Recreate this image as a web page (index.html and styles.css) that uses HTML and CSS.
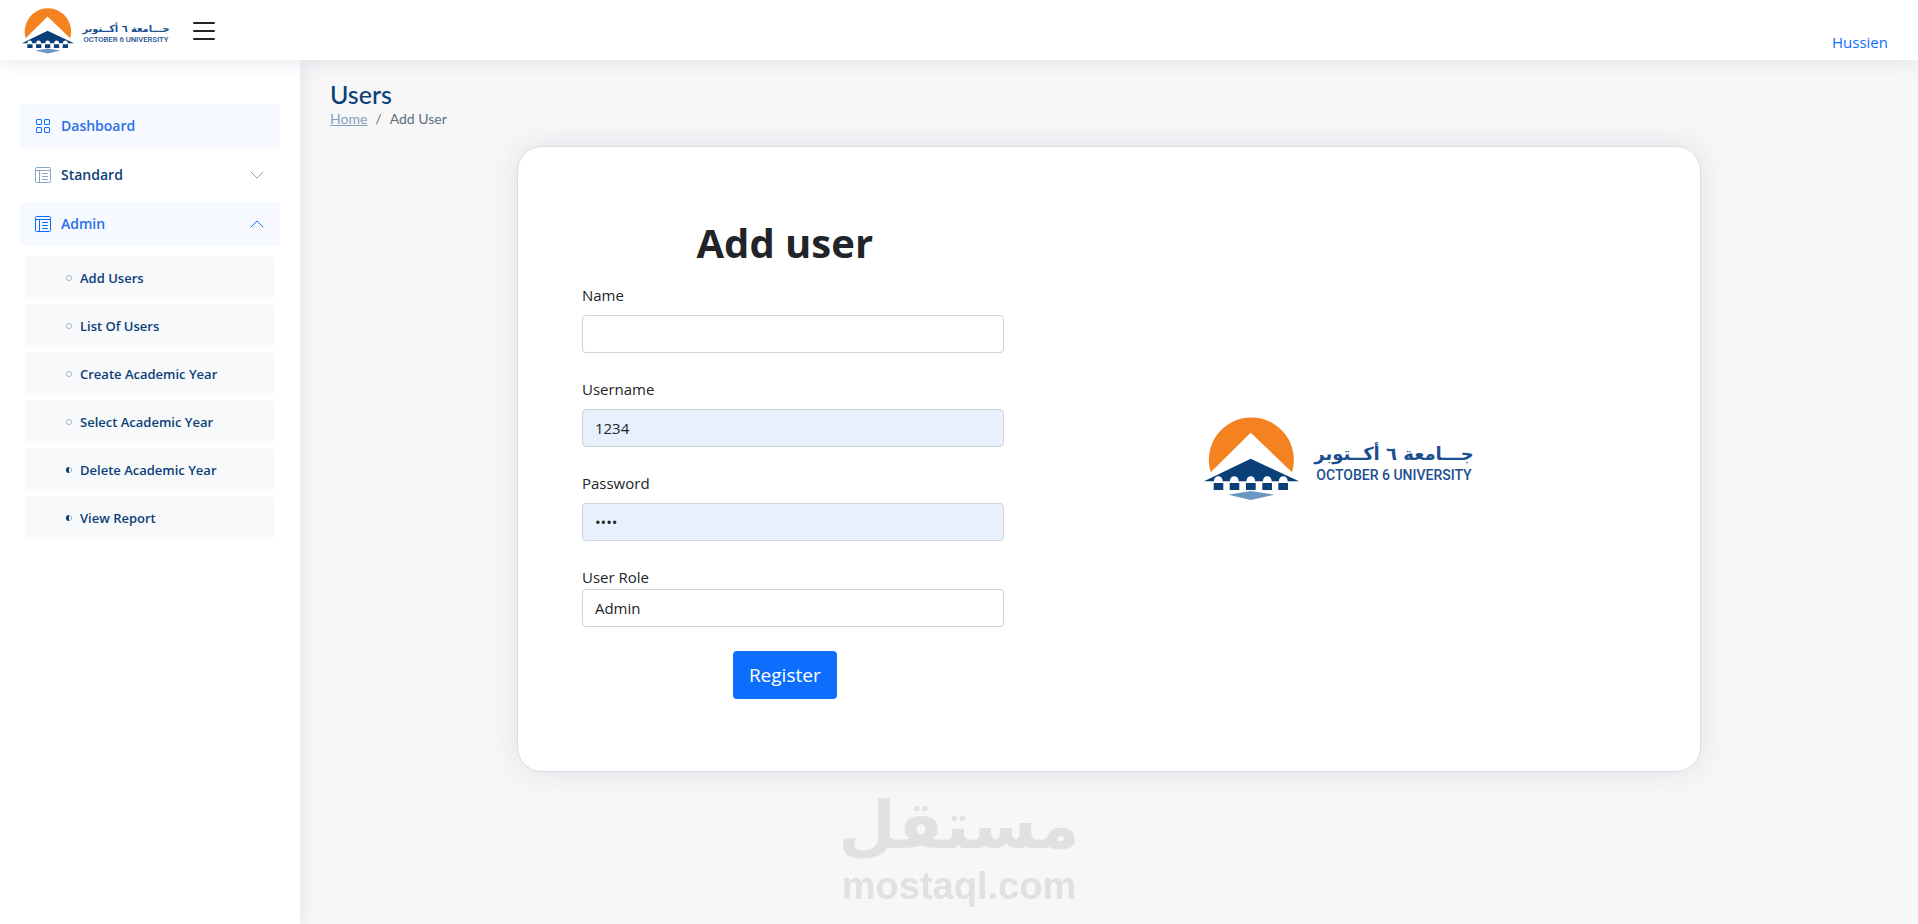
FILE: index.html
```html
<!DOCTYPE html>
<html lang="en">
<head>
    <meta charset="UTF-8">
    <meta name="viewport" content="width=device-width, initial-scale=1.0">
    <title>Add User - October 6 University</title>
    <link rel="stylesheet" href="styles.css">
</head>
<body>
    <!-- Shared icons -->
    <svg class="sprite" aria-hidden="true">
        <symbol id="logo" viewBox="0 0 274 84" overflow="visible">
            <path fill="#f58220" d="M6.700 55.300A42.500 42.500 0 1 1 88 55.300L46.700 15.700Z"/>
            <path fill="#0b3f78" d="M0 64.300L46.700 41.700L95 64.300Z"/>
            <path fill="#fff" d="M10 66v-2.500a4.300 4.300 0 0 1 8.600 0V66zM26 66v-2.500a4.300 4.300 0 0 1 8.600 0V66zM42.500 66v-2.500a4.300 4.300 0 0 1 8.600 0V66zM59 66v-2.500a4.300 4.300 0 0 1 8.600 0V66zM75 66v-2.500a4.300 4.300 0 0 1 8.600 0V66z"/>
            <path fill="#0b3f78" d="M9.700 66h9.600v7H9.700zM25.700 66h9.600v7h-9.600zM42 66h9.700v7H42zM58.300 66H68v7h-9.700zM74.300 66H84v7h-9.700z"/>
            <path fill="#6c97c1" d="M24.300 77.700L46.700 74L70.300 77.700L46.700 83Z"/>
            <text class="logo-ar" x="190" y="43" text-anchor="middle">جـــامعة ٦ أكــتوبر</text>
            <text class="logo-en" x="190" y="63" text-anchor="middle">OCTOBER 6 UNIVERSITY</text>
        </symbol>
        <symbol id="icon-grid" viewBox="0 0 16 16">
            <path d="M1 2.5A1.500 1.500 0 0 1 2.500 1h3A1.500 1.500 0 0 1 7 2.500v3A1.500 1.500 0 0 1 5.500 7h-3A1.500 1.500 0 0 1 1 5.500zM2.500 2a.5.5 0 0 0-.5.5v3a.5.5 0 0 0 .5.5h3a.5.5 0 0 0 .5-.5v-3a.5.5 0 0 0-.5-.5zm6.500.5A1.500 1.500 0 0 1 10.500 1h3A1.500 1.500 0 0 1 15 2.500v3A1.500 1.500 0 0 1 13.500 7h-3A1.500 1.500 0 0 1 9 5.500zm1.500-.5a.5.5 0 0 0-.5.5v3a.5.5 0 0 0 .5.5h3a.5.5 0 0 0 .5-.5v-3a.5.5 0 0 0-.5-.5zM1 10.500A1.500 1.500 0 0 1 2.500 9h3A1.500 1.500 0 0 1 7 10.500v3A1.500 1.500 0 0 1 5.500 15h-3A1.500 1.500 0 0 1 1 13.500zm1.500-.5a.5.5 0 0 0-.5.5v3a.5.5 0 0 0 .5.5h3a.5.5 0 0 0 .5-.5v-3a.5.5 0 0 0-.5-.5zm6.500.5A1.500 1.500 0 0 1 10.500 9h3a1.500 1.500 0 0 1 1.500 1.500v3a1.500 1.500 0 0 1-1.500 1.500h-3A1.500 1.500 0 0 1 9 13.500zm1.500-.5a.5.5 0 0 0-.5.5v3a.5.5 0 0 0 .5.5h3a.5.5 0 0 0 .5-.5v-3a.5.5 0 0 0-.5-.5z"/>
        </symbol>
        <symbol id="icon-list" viewBox="0 0 16 16">
            <g fill="none" stroke="currentColor">
                <rect x=".5" y=".5" width="15" height="15" rx="1"/>
                <path d="M.5 3.500h15M4.500 3.500v12"/>
                <path stroke-linecap="round" d="M7.500 6.500h5M7.500 9.500h5M7.500 12.500h5"/>
            </g>
        </symbol>
        <symbol id="icon-down" viewBox="0 0 16 16">
            <path fill="none" stroke="currentColor" stroke-linecap="round" stroke-linejoin="round" d="M2 5l6 6l6-6"/>
        </symbol>
        <symbol id="icon-up" viewBox="0 0 16 16">
            <path fill="none" stroke="currentColor" stroke-linecap="round" stroke-linejoin="round" d="M2 11l6-6l6 6"/>
        </symbol>
        <symbol id="icon-circle" viewBox="0 0 16 16">
            <circle cx="8" cy="8" r="7" fill="none" stroke="currentColor" stroke-width="2"/>
        </symbol>
        <symbol id="icon-half" viewBox="0 0 16 16">
            <circle cx="8" cy="8" r="7" fill="none" stroke="currentColor" stroke-width="1"/>
            <path d="M8 0a8 8 0 0 0 0 16z"/>
        </symbol>
    </svg>

    <header class="header">
        <a href="#" class="logo" aria-label="October 6 University">
            <svg class="logo-small"><use href="#logo"/></svg>
        </a>
        <button type="button" class="toggle-btn" aria-label="Toggle sidebar">
            <svg viewBox="0 0 22 18"><path fill="none" stroke="currentColor" stroke-width="2" stroke-linecap="round" d="M1 1h20M1 9h20M1 17h20"/></svg>
        </button>
        <a href="#" class="profile">Hussien</a>
    </header>

    <div class="layout">
        <aside class="sidebar">
            <nav>
                <ul class="nav-list">
                    <li><a href="#" class="nav-link active"><svg><use href="#icon-grid"/></svg><span>Dashboard</span></a></li>
                    <li><a href="#" class="nav-link"><svg><use href="#icon-list"/></svg><span>Standard</span><svg class="chevron"><use href="#icon-down"/></svg></a></li>
                    <li>
                        <a href="#" class="nav-link active"><svg><use href="#icon-list"/></svg><span>Admin</span><svg class="chevron"><use href="#icon-up"/></svg></a>
                        <ul class="sub-list">
                            <li><a href="#" class="sub-link"><svg><use href="#icon-circle"/></svg><span>Add Users</span></a></li>
                            <li><a href="#" class="sub-link"><svg><use href="#icon-circle"/></svg><span>List Of Users</span></a></li>
                            <li><a href="#" class="sub-link"><svg><use href="#icon-circle"/></svg><span>Create Academic Year</span></a></li>
                            <li><a href="#" class="sub-link"><svg><use href="#icon-circle"/></svg><span>Select Academic Year</span></a></li>
                            <li><a href="#" class="sub-link"><svg class="half"><use href="#icon-half"/></svg><span>Delete Academic Year</span></a></li>
                            <li><a href="#" class="sub-link"><svg class="half"><use href="#icon-half"/></svg><span>View Report</span></a></li>
                        </ul>
                    </li>
                </ul>
            </nav>
        </aside>

        <main class="main">
            <div class="page-title">
                <h1>Users</h1>
                <nav class="breadcrumb">
                    <a href="#">Home</a>
                    <span>/</span>
                    <span>Add User</span>
                </nav>
            </div>

            <section class="card">
                <form class="user-form">
                    <h2>Add user</h2>

                    <div class="form-group">
                        <label for="name">Name</label>
                        <input type="text" id="name" name="name">
                    </div>

                    <div class="form-group">
                        <label for="username">Username</label>
                        <input type="text" id="username" name="username" class="filled" value="1234">
                    </div>

                    <div class="form-group">
                        <label for="password">Password</label>
                        <input type="password" id="password" name="password" class="filled" value="1234">
                    </div>

                    <div class="form-group role-group">
                        <label for="role">User Role</label>
                        <select id="role" name="role">
                            <option selected>Admin</option>
                        </select>
                    </div>

                    <div class="form-action">
                        <button type="submit" class="register-btn">Register</button>
                    </div>
                </form>

                <div class="card-logo">
                    <svg class="logo-large" role="img" aria-label="October 6 University"><use href="#logo"/></svg>
                </div>
            </section>
        </main>
    </div>

    <div class="watermark">
        <span class="watermark-ar" lang="ar">مستقل</span>
        <span class="watermark-en">mostaql.com</span>
    </div>
</body>
</html>
```

FILE: styles.css
```css
:root {
    --primary-color: #0d6efd;
    --navy: #0b3f78;
    --muted: #8aa4c4;
    --text-color: #212529;
    --background-color: #f7f7f7;
    --shadow: rgba(1, 41, 112, 0.1);
}

* {
    margin: 0;
    padding: 0;
    box-sizing: border-box;
}

body {
    display: flex;
    flex-direction: column;
    min-height: 100vh;
    font-family: "Open Sans", "Noto Sans", sans-serif;
    font-size: 15px;
    line-height: 24px;
    color: var(--text-color);
    background-color: var(--background-color);
}

ul {
    list-style: none;
}

a {
    text-decoration: none;
}

svg {
    fill: currentColor;
}

.sprite {
    position: absolute;
    width: 0;
    height: 0;
}

/* Header */
.header {
    position: relative;
    z-index: 2;
    display: flex;
    align-items: center;
    height: 60px;
    padding: 2px 30px 0 22px;
    background-color: #fff;
    box-shadow: 0 2px 20px var(--shadow);
}

.logo {
    display: flex;
}

.logo-small {
    width: 150px;
    height: 46px;
    overflow: visible;
}

.logo-ar {
    font-family: "DejaVu Sans", sans-serif;
    font-size: 18px;
    font-weight: bold;
    fill: #1b4f8f;
}

.logo-en {
    font-family: Roboto, sans-serif;
    font-size: 14px;
    font-weight: 500;
    fill: #1b4f8f;
}

.toggle-btn {
    display: flex;
    margin-left: 21px;
    border: none;
    background: none;
    color: var(--text-color);
    cursor: pointer;
}

.toggle-btn svg {
    width: 22px;
    height: 18px;
}

.profile {
    margin-left: auto;
    padding-top: 22px;
    color: var(--primary-color);
}

/* Sidebar */
.layout {
    display: flex;
    flex: 1;
}

.sidebar {
    position: relative;
    flex: 0 0 300px;
    padding: 44px 20px 20px;
    background-color: #fff;
    box-shadow: 0 0 20px var(--shadow);
}

.nav-list {
    display: flex;
    flex-direction: column;
    gap: 5px;
}

.nav-link {
    display: flex;
    align-items: center;
    gap: 10px;
    height: 44px;
    padding: 0 15px;
    border-radius: 4px;
    font-weight: 600;
    font-size: 14px;
    color: var(--navy);
}

.nav-link svg {
    width: 16px;
    height: 16px;
    color: var(--muted);
}

.nav-link .chevron {
    margin-left: auto;
}

.nav-link.active {
    background-color: #f6f9ff;
    color: #2a6fe8;
}

.nav-link.active svg {
    color: var(--primary-color);
}

.sub-list {
    display: flex;
    flex-direction: column;
    gap: 5px;
    padding: 10px 5px;
}

.sub-link {
    display: flex;
    align-items: center;
    gap: 8px;
    height: 43px;
    padding-left: 41px;
    border-radius: 4px;
    background-color: #f8f9fb;
    font-size: 13px;
    font-weight: 600;
    color: var(--navy);
}

.sub-link svg {
    width: 6px;
    height: 6px;
    color: var(--muted);
}

.sub-link .half {
    color: var(--navy);
}

/* Main */
.main {
    flex: 1;
    padding: 20px 30px;
}

.page-title {
    margin-bottom: 16px;
    font-family: Lato, sans-serif;
}

.page-title h1 {
    font-size: 25px;
    font-weight: 500;
    line-height: 28px;
    color: var(--navy);
}

.breadcrumb {
    display: flex;
    gap: 8px;
    font-size: 14px;
    line-height: 22px;
    color: #5c6f84;
}

.breadcrumb a {
    color: #7f9fc0;
    text-decoration: underline;
}

.card {
    display: flex;
    align-items: center;
    gap: 42px;
    width: 76%;
    margin: 0 auto;
    padding: 72px 64px;
    border: 1px solid #dbdee3;
    border-radius: 25px;
    background-color: #fff;
    box-shadow: 0 0 30px var(--shadow);
}

.user-form {
    flex: 0 0 40%;
}

.user-form h2 {
    margin-bottom: 16px;
    padding-right: 16px;
    font-size: 40px;
    line-height: 48px;
    text-align: center;
}

.form-group {
    margin-bottom: 24px;
}

.form-group label {
    display: block;
    margin-bottom: 8px;
}

.role-group label {
    margin-bottom: 0;
}

.form-group input,
.form-group select {
    display: block;
    width: 100%;
    height: 38px;
    padding: 6px 12px;
    border: 1px solid #ced4da;
    border-radius: 4px;
    background-color: #fff;
    font-family: inherit;
    font-size: 15px;
    color: var(--text-color);
    appearance: none;
}

.form-group .filled {
    background-color: #e8f0fe;
}

.form-action {
    padding-right: 16px;
    text-align: center;
}

.register-btn {
    display: inline-block;
    height: 48px;
    padding: 0 16px;
    border: none;
    border-radius: 4px;
    background-color: var(--primary-color);
    color: #fff;
    font-family: inherit;
    font-size: 19px;
    vertical-align: top;
    cursor: pointer;
}

.card-logo {
    display: flex;
    flex: 1;
    justify-content: center;
}

.logo-large {
    width: 274px;
    height: 84px;
    overflow: visible;
}

/* Watermark over the page */
.watermark {
    position: fixed;
    bottom: 16px;
    left: 50%;
    display: flex;
    flex-direction: column;
    align-items: center;
    transform: translateX(-50%);
    color: #e1e1e1;
    pointer-events: none;
}

.watermark-ar {
    font-family: "DejaVu Sans", sans-serif;
    font-size: 66px;
    font-weight: bold;
    line-height: 76px;
}

.watermark-en {
    font-family: "Liberation Sans", sans-serif;
    font-size: 38px;
    font-weight: bold;
    line-height: 44px;
}
```
